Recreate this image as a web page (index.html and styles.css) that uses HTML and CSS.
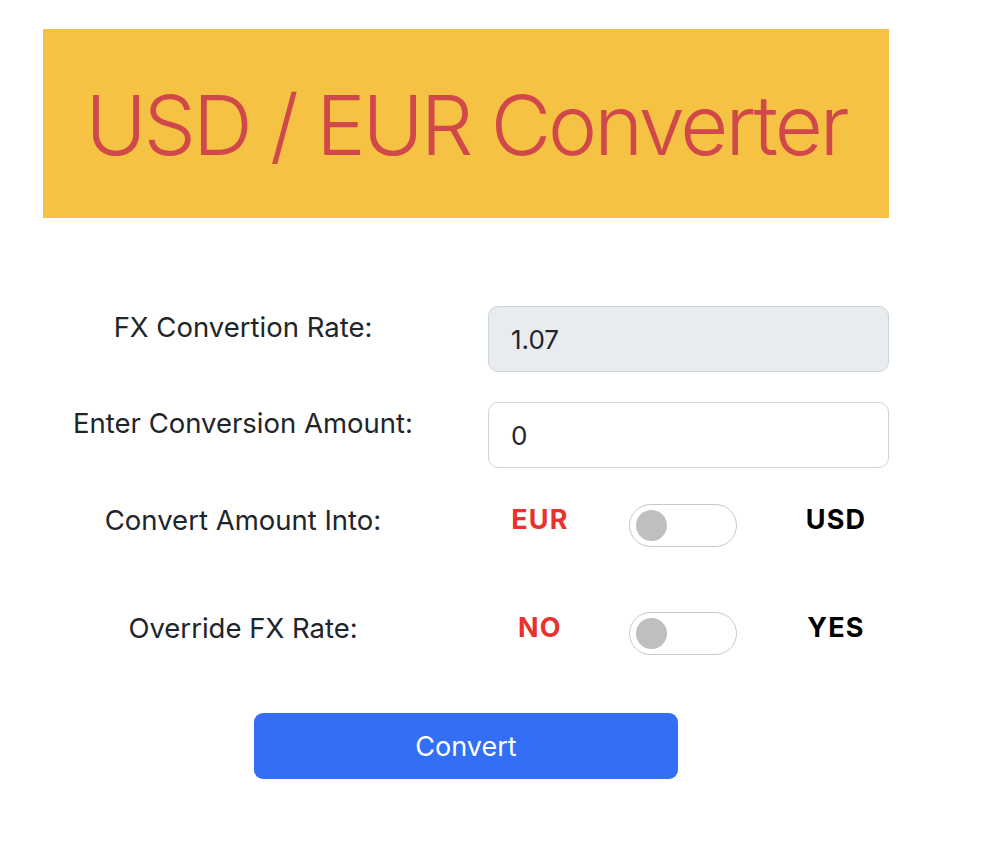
FILE: index.html
```html
<!DOCTYPE html>
<html lang="en">
<head>
<meta charset="utf-8">
<title>USD / EUR Converter</title>
<link rel="stylesheet" href="styles.css">
</head>
<body>
<div class="app">
  <header class="banner">
    <h1 class="title">USD / EUR Converter</h1>
  </header>
  <form class="form">
    <div class="row">
      <label class="label">FX Convertion Rate:</label>
      <input class="field field-disabled" type="text" value="1.07" disabled>
    </div>
    <div class="row">
      <label class="label">Enter Conversion Amount:</label>
      <input class="field" type="text" value="0">
    </div>
    <div class="row row-toggle">
      <label class="label">Convert Amount Into:</label>
      <div class="switch-group">
        <span class="opt opt-off">EUR</span>
        <span class="switch-cell"><span class="switch"><span class="knob"></span></span></span>
        <span class="opt opt-on">USD</span>
      </div>
    </div>
    <div class="row row-toggle row-last">
      <label class="label">Override FX Rate:</label>
      <div class="switch-group">
        <span class="opt opt-off">NO</span>
        <span class="switch-cell"><span class="switch"><span class="knob"></span></span></span>
        <span class="opt opt-on">YES</span>
      </div>
    </div>
    <div class="actions">
      <button class="btn" type="button">Convert</button>
    </div>
  </form>
</div>
</body>
</html>
```
FILE: styles.css
```css
* { box-sizing: border-box; }
body {
  margin: 0;
  background: #fff;
  font-family: Inter, "Noto Sans", "Liberation Sans", sans-serif;
  color: #212529;
}
.app {
  width: 846px;
  margin-left: 43px;
  padding-top: 29px;
}
.banner {
  height: 189px;
  background: #f5c244;
  display: flex;
  align-items: center;
  justify-content: center;
}
.title {
  margin: 0;
  font-size: 83px;
  font-weight: 300;
  color: #d1484a;
  letter-spacing: -3px;
  line-height: 1;
  padding-top: 4px;
}
.form {
  margin-top: 88px;
  display: flex;
  flex-direction: column;
}
.row {
  display: grid;
  grid-template-columns: 400px 401px;
  column-gap: 45px;
  align-items: start;
  margin-bottom: 30px;
}
.label {
  text-align: center;
  font-size: 27.5px;
  line-height: 36px;
  padding-top: 3px;
}
.field {
  height: 66px;
  width: 401px;
  border: 1px solid #ced4da;
  border-radius: 10px;
  padding: 0 22px;
  font-family: inherit;
  font-size: 26px;
  color: #212529;
  background: #fff;
  outline: none;
}
.field-disabled {
  background: #e9ecef;
  color: #212529;
  -webkit-text-fill-color: #212529;
  opacity: 1;
}
.row-toggle {
  align-items: center;
  margin-bottom: 0;
  height: 43px;
}
.row-toggle + .row-toggle { margin-top: 65px; }
.row:nth-child(2) { margin-bottom: 36px; }
.row-toggle .label { padding-top: 0; margin-top: -11px; }
.switch-group {
  display: grid;
  grid-template-columns: 104px 182px 124px;
  align-items: center;
}
.opt {
  text-align: center;
  font-size: 27px;
  font-weight: 700;
  letter-spacing: 1.2px;
  line-height: 36px;
  margin-top: -11px;
}
.opt-off { color: #e8322b; }
.opt-on { color: #000; }
.switch-cell { display: flex; justify-content: center; }
.switch {
  width: 108px;
  height: 43px;
  border: 1px solid #c8c8c8;
  border-radius: 22px;
  background: #fff;
  display: flex;
  align-items: center;
  padding-left: 6px;
}
.knob {
  width: 31px;
  height: 31px;
  border-radius: 50%;
  background: #bfbfbf;
}
.actions {
  margin-top: 58px;
  display: flex;
  justify-content: center;
}
.btn {
  width: 424px;
  height: 66px;
  border: none;
  border-radius: 9px;
  background: #336ff4;
  color: #fff;
  font-family: inherit;
  font-size: 27px;
  cursor: pointer;
}
```
